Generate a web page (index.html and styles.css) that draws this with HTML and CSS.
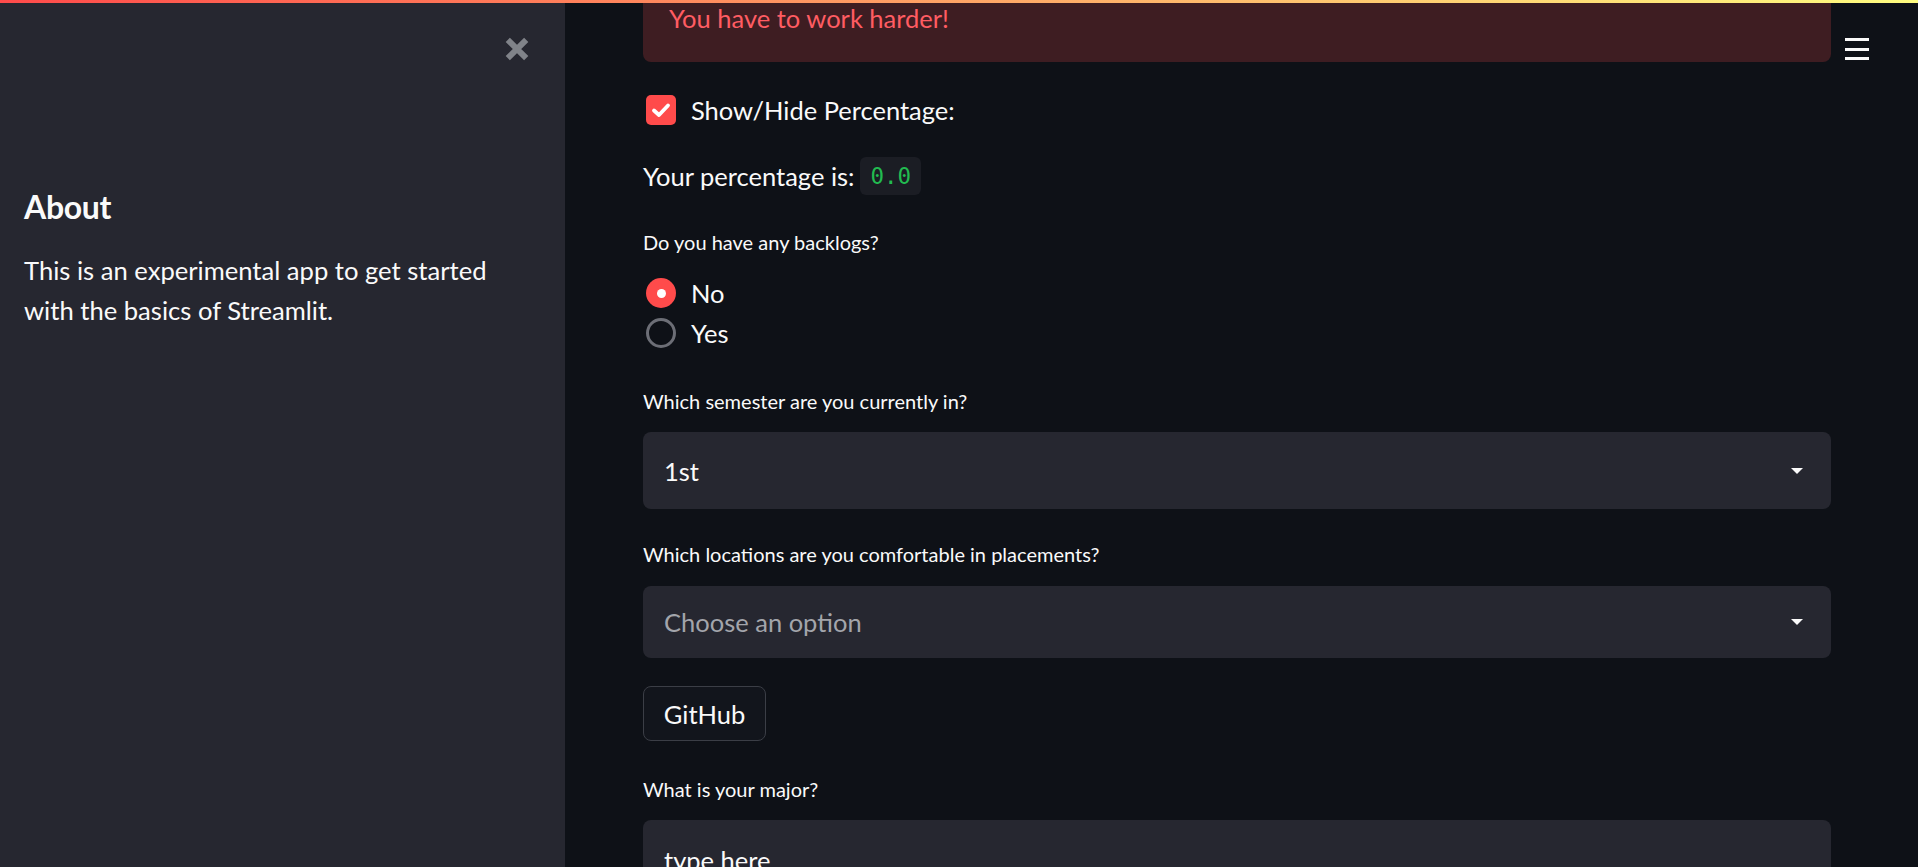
FILE: index.html
```html
<!DOCTYPE html>
<html lang="en">
<head>
<meta charset="utf-8">
<title>Streamlit App</title>
<link rel="stylesheet" href="styles.css">
</head>
<body>
<div class="decoration"></div>
<div class="app">
  <aside class="sidebar">
    <div class="sidebar-top">
      <button class="close-btn" aria-label="Close sidebar">
        <svg viewBox="0 0 24 24" width="26" height="26"><path d="M3.5 3.5 L20.5 20.5 M20.5 3.5 L3.5 20.5" stroke="#808389" stroke-width="5.5" stroke-linecap="butt"/></svg>
      </button>
    </div>
    <h2 class="side-title">About</h2>
    <p class="side-text">This is an experimental app to get started with the basics of Streamlit.</p>
  </aside>
  <main class="main">
    <button class="menu-btn" aria-label="Menu"><span></span><span></span><span></span></button>
    <div class="content">
      <div class="alert">You have to work harder!</div>

      <label class="check-row">
        <span class="checkbox">
          <svg viewBox="0 0 24 24" width="24" height="24"><path d="M5 12.5 L10 17 L19 7.5" fill="none" stroke="#fff" stroke-width="3.8" stroke-linecap="round" stroke-linejoin="round"/></svg>
        </span>
        <span class="check-label">Show/Hide Percentage:</span>
      </label>

      <div class="pct-row">Your percentage is: <code class="code">0.0</code></div>

      <div class="label l1">Do you have any backlogs?</div>
      <div class="radio-group">
        <div class="radio-row"><span class="radio on"></span><span class="radio-label">No</span></div>
        <div class="radio-row"><span class="radio"></span><span class="radio-label">Yes</span></div>
      </div>

      <div class="label l2">Which semester are you currently in?</div>
      <div class="select s1"><span class="sel-value">1st</span><span class="caret"></span></div>

      <div class="label l3">Which locations are you comfortable in placements?</div>
      <div class="select s2"><span class="sel-placeholder">Choose an option</span><span class="caret"></span></div>

      <button class="btn">GitHub</button>

      <div class="label l4">What is your major?</div>
      <div class="text-input"><span class="input-value">type here</span></div>
    </div>
  </main>
</div>
</body>
</html>
```
FILE: styles.css
```css
* { box-sizing: border-box; }
html, body {
  margin: 0;
  padding: 0;
  height: 867px;
  overflow: hidden;
  background: #0e1117;
  font-family: "Lato", "Noto Sans", sans-serif;
  color: #fafafa;
}
.decoration {
  position: absolute;
  top: 0; left: 0; right: 0;
  height: 3px;
  background: linear-gradient(90deg, #ff4b4b, #fffd80);
  z-index: 10;
}
.app {
  display: flex;
  height: 867px;
}
.sidebar {
  width: 565px;
  flex: 0 0 565px;
  background: #262730;
  padding: 0 24px;
}
.sidebar-top {
  display: flex;
  justify-content: flex-end;
  padding-top: 36px;
  height: 62px;
  margin-right: 11px;
}
.close-btn {
  background: none;
  border: none;
  padding: 0;
  width: 26px;
  height: 26px;
  cursor: pointer;
  display: flex;
}
.side-title {
  margin: 122px 0 0;
  font-size: 32px;
  font-weight: 700;
  line-height: 46px;
  letter-spacing: -0.3px;
}
.side-text {
  margin: 20px 0 0;
  padding-right: 30px;
  font-size: 25.6px;
  line-height: 40px;
}
.main {
  flex: 1;
  position: relative;
}
.menu-btn {
  position: absolute;
  top: 38px;
  left: 1280px;
  width: 26px;
  height: 22px;
  background: none;
  border: none;
  padding: 0;
  display: flex;
  flex-direction: column;
  justify-content: space-between;
}
.menu-btn span {
  display: block;
  width: 24px;
  height: 3px;
  background: #fafafa;
}
.content {
  margin-left: 78px;
  width: 1188px;
  display: flex;
  flex-direction: column;
  align-items: flex-start;
  font-size: 25.5px;
}
.alert {
  align-self: stretch;
  margin-top: -24px;
  height: 86px;
  padding: 22px 26px 0;
  line-height: 40px;
  background: #3e1d22;
  color: #ff5c62;
  border-radius: 8px;
}
.check-row {
  margin-top: 33px;
  height: 30px;
  display: flex;
  align-items: center;
  padding-left: 3px;
}
.checkbox {
  width: 30px;
  height: 30px;
  background: #ff4b4b;
  border-radius: 5px;
  display: flex;
  align-items: center;
  justify-content: center;
}
.check-label {
  margin-left: 15px;
  line-height: 40px;
}
.pct-row {
  margin-top: 31px;
  height: 40px;
  display: flex;
  align-items: center;
  line-height: 40px;
  gap: 6px;
}
.code {
  display: inline-flex;
  align-items: center;
  height: 38px;
  padding: 0 10px;
  background: #1b1d24;
  border-radius: 6px;
  color: #22bb50;
  font-family: "DejaVu Sans Mono", "Liberation Mono", monospace;
  font-size: 22.5px;
}
.label {
  height: 30px;
  line-height: 30px;
  font-size: 20px;
}
.l1 { margin-top: 31px; }
.l2 { margin-top: 33px; }
.l3 { margin-top: 30px; }
.l4 { margin-top: 33px; }
.radio-group {
  margin-top: 16px;
  display: flex;
  flex-direction: column;
}
.radio-row {
  height: 40px;
  display: flex;
  align-items: center;
  padding-left: 3px;
}
.radio {
  width: 30px;
  height: 30px;
  border-radius: 50%;
  border: 3px solid #6c6e76;
  display: flex;
  align-items: center;
  justify-content: center;
}
.radio.on {
  border: none;
  background: #ff4b4b;
}
.radio.on::after {
  content: "";
  width: 9px;
  height: 9px;
  border-radius: 50%;
  background: #fff;
}
.radio-label {
  margin-left: 15px;
}
.select {
  align-self: stretch;
  background: #262730;
  border-radius: 8px;
  display: flex;
  align-items: center;
  justify-content: space-between;
  padding: 0 28px 0 21px;
}
.s1 { margin-top: 16px; height: 77px; }
.s2 { margin-top: 17px; height: 72px; }
.sel-placeholder { color: #a3a5ab; }
.caret {
  width: 0;
  height: 0;
  border-left: 6px solid transparent;
  border-right: 6px solid transparent;
  border-top: 6px solid #fafafa;
}
.btn {
  margin-top: 28px;
  height: 55px;
  width: 123px;
  background: #12151c;
  border: 1px solid #3b3e46;
  border-radius: 8px;
  color: #fafafa;
  font-family: inherit;
  font-size: 25.5px;
  padding: 0;
}
.text-input {
  align-self: stretch;
  margin-top: 16px;
  height: 90px;
  background: #262730;
  border-radius: 8px;
  padding: 20px 21px 0;
  line-height: 40px;
}
```
